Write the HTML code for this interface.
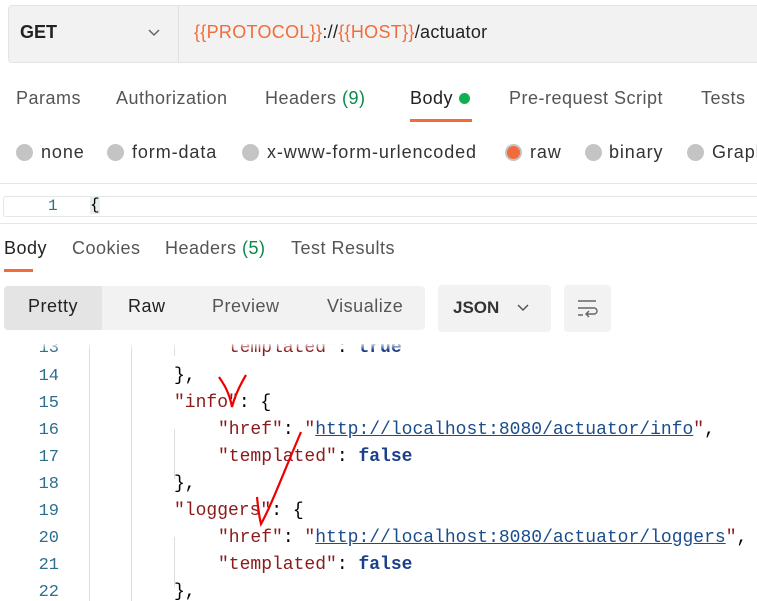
<!DOCTYPE html>
<html><head><meta charset="utf-8"><style>
body{margin:0;width:757px;height:601px;overflow:hidden;background:#fff;font-family:"Liberation Sans",sans-serif;position:relative}
.a{position:absolute;white-space:nowrap}
.t{font-size:18px;letter-spacing:0.5px}
.r{font-size:18px;letter-spacing:0.9px;color:#333}
.g{color:#555}
.code{font-family:"Liberation Mono",monospace;font-size:18px}
.ln{position:absolute;left:0;width:59px;text-align:right;color:#2c6f8f;font-family:"Liberation Mono",monospace;font-size:17px}
.k{color:#8b1a1a}.s{color:#1a4d8c;text-decoration:underline}.b{color:#1a3f8c;font-weight:bold}
.rad{position:absolute;width:17px;height:17px;border-radius:50%;background:#c4c4c4;top:144px}
</style></head><body>
<div class="a" style="left:8px;top:5px;width:760px;height:56px;background:#f2f2f2;border:1px solid #e4e4e4;border-radius:4px"></div>
<div class="a" style="left:178px;top:6px;width:1px;height:56px;background:#e0e0e0"></div>
<div class="a" style="left:20px;top:22px;font-size:18px;font-weight:bold;color:#222">GET</div>
<svg class="a" style="left:147px;top:28px" width="14" height="10"><path d="M2 2l5 5 5-5" stroke="#666" stroke-width="1.5" fill="none"/></svg>
<div class="a" style="left:194px;top:22px;font-size:18px;letter-spacing:0.3px;color:#222"><span style="color:#f26b3a">{{PROTOCOL}}</span>://<span style="color:#f26b3a">{{HOST}}</span>/actuator</div>

<div class="a g t" style="left:16px;top:88px">Params</div>
<div class="a g t" style="left:116px;top:88px">Authorization</div>
<div class="a g t" style="left:265px;top:88px">Headers <span style="color:#0a8a4a">(9)</span></div>
<div class="a t" style="left:410px;top:88px;color:#222">Body</div>
<div class="a" style="left:459px;top:93px;width:11px;height:11px;border-radius:50%;background:#0cb251"></div>
<div class="a" style="left:410px;top:119px;width:62px;height:3px;background:#f26b3a"></div>
<div class="a g t" style="left:509px;top:88px">Pre-request Script</div>
<div class="a g t" style="left:701px;top:88px">Tests</div>

<div class="rad" style="left:16px"></div><div class="a r" style="left:41px;top:142px">none</div>
<div class="rad" style="left:107px"></div><div class="a r" style="left:132px;top:142px">form-data</div>
<div class="rad" style="left:242px"></div><div class="a r" style="left:267px;top:142px">x-www-form-urlencoded</div>
<div class="rad" style="left:505px;background:#f26b3a;border:2px solid #c4c4c4;width:13px;height:13px"></div><div class="a r" style="left:530px;top:142px">raw</div>
<div class="rad" style="left:585px"></div><div class="a r" style="left:609px;top:142px">binary</div>
<div class="rad" style="left:687px"></div><div class="a r" style="left:712px;top:142px">Graph</div>

<div class="a" style="left:0;top:183px;width:757px;height:1px;background:#e6e6e6"></div>
<div class="a" style="left:3px;top:196px;width:760px;height:19px;border:1px solid #e6e6e6;border-radius:3px"></div>
<div class="a" style="left:48px;top:197px;font-family:'Liberation Mono',monospace;font-size:16px;color:#2c6f8f">1</div>
<div class="a code" style="left:90px;top:196px;font-size:16px;background:#e8efe8">{</div>
<div class="a" style="left:0;top:223px;width:757px;height:1px;background:#e6e6e6"></div>

<div class="a t" style="left:4px;top:238px;color:#222">Body</div>
<div class="a g t" style="left:72px;top:238px">Cookies</div>
<div class="a g t" style="left:165px;top:238px">Headers <span style="color:#0a8a4a">(5)</span></div>
<div class="a g t" style="left:291px;top:238px">Test Results</div>
<div class="a" style="left:4px;top:269px;width:29px;height:3px;background:#f26b3a"></div>

<div class="a" style="left:4px;top:286px;width:421px;height:44px;background:#f2f2f2;border-radius:4px"></div>
<div class="a" style="left:4px;top:286px;width:98px;height:44px;background:#e4e4e4;border-radius:4px 0 0 4px"></div>
<div class="a t" style="left:28px;top:296px;color:#222">Pretty</div>
<div class="a t" style="left:128px;top:296px;color:#222">Raw</div>
<div class="a g t" style="left:212px;top:296px">Preview</div>
<div class="a g t" style="left:327px;top:296px">Visualize</div>
<div class="a" style="left:438px;top:285px;width:113px;height:47px;background:#f2f2f2;border-radius:4px"></div>
<div class="a" style="left:453px;top:298px;font-size:17px;font-weight:bold;color:#333">JSON</div>
<svg class="a" style="left:516px;top:303px" width="14" height="10"><path d="M2 2l5 5 5-5" stroke="#555" stroke-width="1.5" fill="none"/></svg>
<div class="a" style="left:564px;top:285px;width:47px;height:47px;background:#f2f2f2;border-radius:4px"></div>
<svg class="a" style="left:576px;top:298px" width="24" height="22"><path d="M2 3h18M2 10h16a3 3 0 0 1 0 6h-7M13 13l-3 3 3 3M2 17h5" stroke="#666" stroke-width="1.4" fill="none"/></svg>

<div class="a" style="left:0;top:344px;width:757px;height:257px;overflow:hidden">
<div class="a" style="left:89px;top:0;width:1px;height:259px;background:#ddd"></div>
<div class="a" style="left:131px;top:0;width:1px;height:259px;background:#ddd"></div>
<div class="a" style="left:174px;top:0;width:1px;height:12px;background:#ddd"></div>
<div class="a" style="left:174px;top:85px;width:1px;height:50px;background:#ddd"></div>
<div class="a" style="left:174px;top:193px;width:1px;height:50px;background:#ddd"></div>
<div class="ln" style="top:-5px">13</div><div class="a code" style="left:218px;top:-6px"><span class="k">"templated"</span>: <span class="b">true</span></div>
<div class="ln" style="top:23px">14</div><div class="a code" style="left:174px;top:22px">},</div>
<div class="ln" style="top:50px">15</div><div class="a code" style="left:174px;top:49px"><span class="k">"info"</span>: {</div>
<div class="ln" style="top:77px">16</div><div class="a code" style="left:218px;top:76px"><span class="k">"href"</span>: <span class="k">"</span><span class="s">http://localhost:8080/actuator/info</span><span class="k">"</span>,</div>
<div class="ln" style="top:104px">17</div><div class="a code" style="left:218px;top:103px"><span class="k">"templated"</span>: <span class="b">false</span></div>
<div class="ln" style="top:131px">18</div><div class="a code" style="left:174px;top:130px">},</div>
<div class="ln" style="top:158px">19</div><div class="a code" style="left:174px;top:157px"><span class="k">"loggers"</span>: {</div>
<div class="ln" style="top:185px">20</div><div class="a code" style="left:218px;top:184px"><span class="k">"href"</span>: <span class="k">"</span><span class="s">http://localhost:8080/actuator/loggers</span><span class="k">"</span>,</div>
<div class="ln" style="top:212px">21</div><div class="a code" style="left:218px;top:211px"><span class="k">"templated"</span>: <span class="b">false</span></div>
<div class="ln" style="top:239px">22</div><div class="a code" style="left:174px;top:238px">},</div>
</div>
<div class="a" style="left:0;top:336px;width:757px;height:14px;background:linear-gradient(#fff 45%,rgba(255,255,255,0))"></div>
<svg class="a" style="left:0;top:0" width="757" height="601"><path d="M219 377c4 6 10 14 13 30c3-12 8-22 14-32" stroke="#e00" stroke-width="2.2" fill="none"/><path d="M257 497c1 10 2 19 4 27c10-18 22-50 40-92" stroke="#e00" stroke-width="2.2" fill="none"/></svg>
</body></html>
